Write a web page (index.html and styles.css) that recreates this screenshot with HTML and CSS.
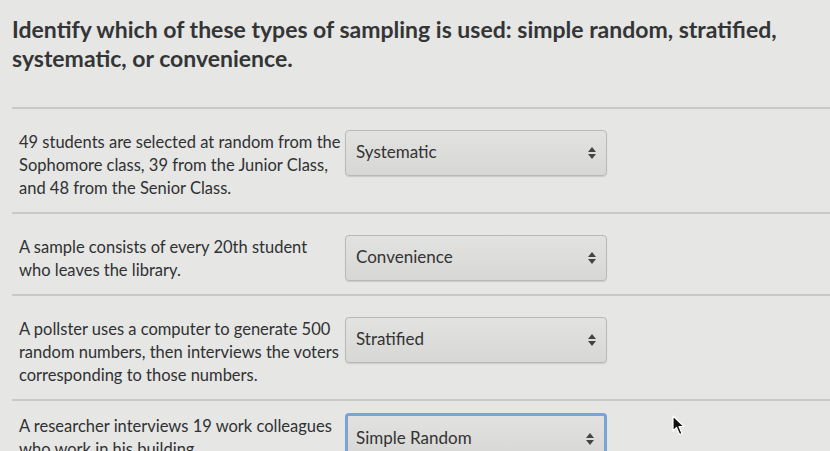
FILE: index.html
```html
<!DOCTYPE html>
<html>
<head>
<meta charset="utf-8">
<link rel="stylesheet" href="styles.css">
</head>
<body>
<div class="page">
  <h1 class="title">Identify which of these types of sampling is used: simple random, stratified, systematic, or convenience.</h1>
  <div class="rows">
    <div class="row">
      <div class="prompt">49 students are selected at random from the Sophomore class, 39 from the Junior Class, and 48 from the Senior Class.</div>
      <div class="select"><span>Systematic</span><svg class="arrows" width="8" height="12" viewBox="0 0 8 12"><path d="M4 0 L8 5 L0 5 Z M0 7 L8 7 L4 12 Z" fill="#444"/></svg></div>
    </div>
    <div class="row">
      <div class="prompt">A sample consists of every 20th student who leaves the library.</div>
      <div class="select"><span>Convenience</span><svg class="arrows" width="8" height="12" viewBox="0 0 8 12"><path d="M4 0 L8 5 L0 5 Z M0 7 L8 7 L4 12 Z" fill="#444"/></svg></div>
    </div>
    <div class="row">
      <div class="prompt">A pollster uses a computer to generate 500 random numbers, then interviews the voters corresponding to those numbers.</div>
      <div class="select"><span>Stratified</span><svg class="arrows" width="8" height="12" viewBox="0 0 8 12"><path d="M4 0 L8 5 L0 5 Z M0 7 L8 7 L4 12 Z" fill="#444"/></svg></div>
    </div>
    <div class="row last">
      <div class="prompt">A researcher interviews 19 work colleagues who work in his building.</div>
      <div class="select focused"><span>Simple Random</span><svg class="arrows" width="8" height="12" viewBox="0 0 8 12"><path d="M4 0 L8 5 L0 5 Z M0 7 L8 7 L4 12 Z" fill="#444"/></svg></div>
      <svg class="cursor" width="14" height="21" viewBox="0 0 14 21"><path d="M1 1 L1 16 L4.5 12.5 L7.5 19.5 L10 18.5 L7 11.5 L12 11.5 Z" fill="#111" stroke="#fff" stroke-width="1.2" stroke-linejoin="round"/></svg>
    </div>
  </div>
</div>
</body>
</html>
```
FILE: styles.css
```css
html, body {
  margin: 0;
  padding: 0;
  background: #e6e6e4;
}
body {
  width: 830px;
  height: 451px;
  overflow: hidden;
  font-family: Lato, "Open Sans", sans-serif;
  color: #2f3133;
}
.page {
  padding: 15px 0 0 12px;
}
.title {
  margin: 0;
  font-size: 23px;
  font-weight: 700;
  line-height: 29px;
  color: #333536;
  padding-bottom: 34px;
}
.rows {
  display: flex;
  flex-direction: column;
}
.row {
  position: relative;
  display: flex;
  align-items: flex-start;
  border-top: 2px solid #c9c9c7;
  padding: 22px 0 12px 7px;
}
.row.last {
  padding-top: 14px;
}
.prompt {
  width: 323px;
  font-size: 16.5px;
  line-height: 23px;
  color: #2f3133;
}
.select {
  box-sizing: border-box;
  width: 262px;
  height: 46px;
  display: flex;
  align-items: center;
  justify-content: space-between;
  margin-left: 3px;
  padding: 0 10px 4px 10px;
  border: 1px solid #b9b9b7;
  border-radius: 4px;
  background: linear-gradient(#e2e2e0, #d7d7d5);
  box-shadow: 0 1px 1px rgba(0,0,0,0.12);
  font-size: 17px;
  color: #333;
  margin-top: -1px;
}
.select .arrows {
  margin-top: 4px;
}
.select.focused {
  border: 3px solid #7aa3d6;
  padding-left: 8px;
  margin-top: -2px;
  padding-top: 6px;
}
.cursor {
  position: absolute;
  left: 660px;
  top: 14px;
}
```
